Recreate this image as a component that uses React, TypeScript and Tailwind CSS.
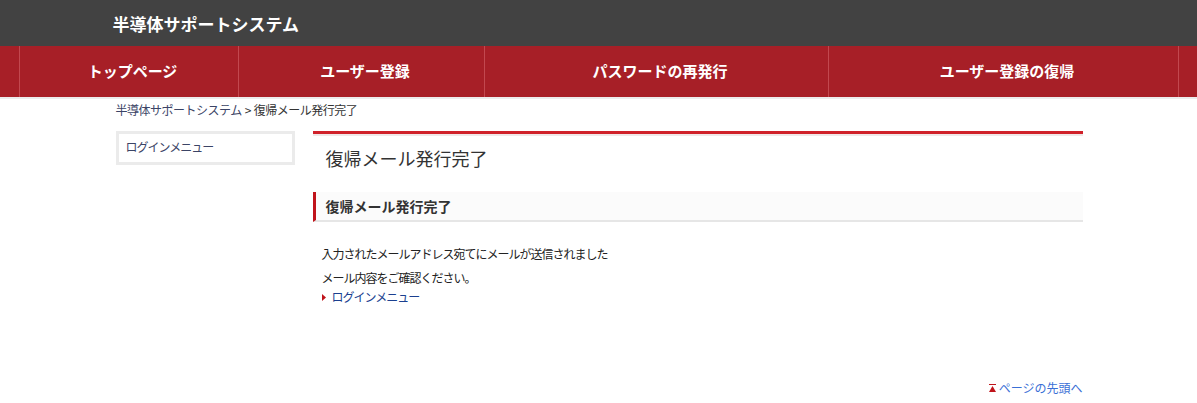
import React from "react";

const font = { fontFamily: '"Noto Sans CJK JP", "Noto Sans", sans-serif' };

export default function App() {
  const nav = [
    { label: "トップページ", w: "w-[219px]" },
    { label: "ユーザー登録", w: "w-[246px]" },
    { label: "パスワードの再発行", w: "w-[344px]" },
    { label: "ユーザー登録の復帰", w: "w-[351px]" },
  ];
  return (
    <div className="w-[1197px] min-h-[403px] bg-white text-[#333]" style={font}>
      {/* header */}
      <div className="h-[46px] bg-[#424242]">
        <div className="w-[968px] mx-auto h-full flex items-center">
          <h1 className="ml-[-2px] text-[17px] font-bold text-white leading-none">半導体サポートシステム</h1>
        </div>
      </div>
      {/* nav */}
      <div className="h-[53px] bg-[#a71f27] border-b-2 border-[#ececec]">
        <div className="w-[1160px] mx-auto flex h-full">
          {nav.map((n, i) => (
            <div
              key={n.label}
              className={`${n.w} h-full flex items-center justify-center pl-[8px] border-l border-[#c2484f] ${i === nav.length - 1 ? "border-r" : ""}`}
            >
              <span className="text-[15px] font-bold text-white">{n.label}</span>
            </div>
          ))}
        </div>
      </div>
      {/* breadcrumb */}
      <div className="w-[968px] mx-auto pt-[2px] pl-[1px] text-[12px] leading-[18px] tracking-[-0.5px]">
        <span className="text-[#3b4466]">半導体サポートシステム</span>
        <span className="text-[#333] mx-[3px]">&gt;</span>
        <span className="text-[#333]">復帰メール発行完了</span>
      </div>
      {/* columns */}
      <div className="w-[968px] mx-auto mt-[12px] flex">
        <div className="w-[179px] ml-[1px] shrink-0">
          <div className="h-[34px] border-[3px] border-[#ebebeb] bg-white flex items-center pl-[7px] pb-[2px]">
            <span className="text-[12px] tracking-[-1px] text-[#3b4466]">ログインメニュー</span>
          </div>
        </div>
        <div className="ml-[18px] flex-1">
          <div className="border-t-[3px] border-[#d0212a]" />
          <div className="h-[2px] bg-[#f0e8e8]" />
          <div className="h-[44px] flex items-center pl-[13px]">
            <h2 className="text-[18px] text-[#333] leading-none">復帰メール発行完了</h2>
          </div>
          <div className="mt-[12px] h-[30px] border-l-[3px] border-[#c0141b] bg-[#fbfbfb] border-b-2 border-b-[#e6e6e6] flex items-center pl-[10px]">
            <h3 className="text-[14px] font-bold text-[#333] leading-none">復帰メール発行完了</h3>
          </div>
          <div className="pl-[9px] mt-[23px] text-[12px] tracking-[-1px] text-[#222]">
            <p className="leading-[18px]">入力されたメールアドレス宛てにメールが送信されました</p>
            <p className="leading-[18px] mt-[6px]">メール内容をご確認ください。</p>
            <div className="flex items-center leading-[18px] mt-[1px]">
              <svg width="4" height="7" viewBox="0 0 4 7" className="mr-[6px]">
                <polygon points="0,0 4,3.5 0,7" fill="#c0141b" />
              </svg>
              <span className="text-[#1b3f8f]">ログインメニュー</span>
            </div>
          </div>
        </div>
      </div>
      {/* page top */}
      <div className="w-[968px] mx-auto mt-[73px] flex justify-end items-center">
        <svg width="7" height="8" viewBox="0 0 7 8" className="mr-[3px]">
          <rect x="0" y="0" width="7" height="1" fill="#c0141b" />
          <polygon points="3.5,2 7,8 0,8" fill="#c0141b" />
        </svg>
        <span className="text-[12px] leading-[18px] text-[#3a6fd6]">ページの先頭へ</span>
      </div>
    </div>
  );
}
